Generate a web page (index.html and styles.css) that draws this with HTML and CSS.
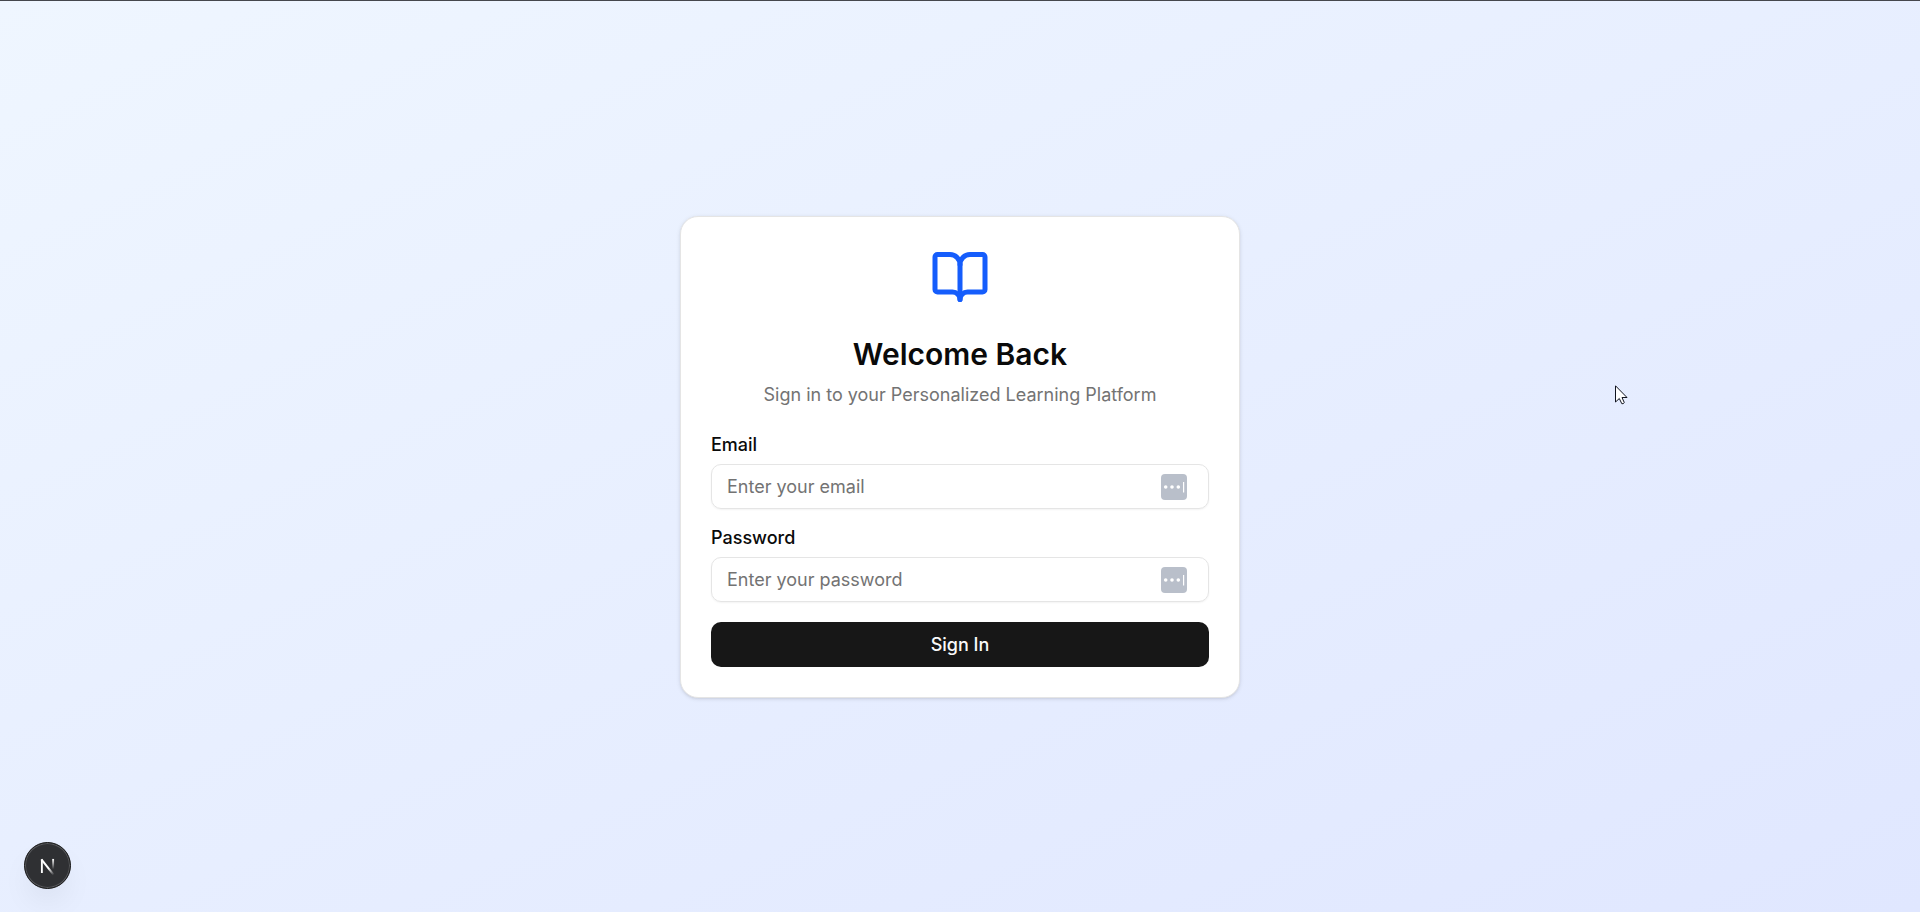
FILE: index.html
```html
<!DOCTYPE html>
<html lang="en">
<head>
<meta charset="utf-8">
<meta name="viewport" content="width=device-width, initial-scale=1">
<title>Sign In</title>
<link rel="stylesheet" href="styles.css">
</head>
<body>
<main class="page">
  <section class="card">
    <header class="card-header">
      <svg class="logo" viewBox="0 0 24 24" aria-hidden="true">
        <path d="M12 7v14"/>
        <path d="M3 18a1 1 0 0 1-1-1V4a1 1 0 0 1 1-1h5a4 4 0 0 1 4 4 4 4 0 0 1 4-4h5a1 1 0 0 1 1 1v13a1 1 0 0 1-1 1h-6a3 3 0 0 0-3 3 3 3 0 0 0-3-3z"/>
      </svg>
      <h1 class="title">Welcome Back</h1>
      <p class="subtitle">Sign in to your Personalized Learning Platform</p>
    </header>
    <form class="form">
      <div class="field">
        <label class="label" for="email">Email</label>
        <div class="control">
          <input class="input" id="email" type="email" placeholder="Enter your email">
          <svg class="autofill" viewBox="0 0 26 26" aria-hidden="true">
            <rect width="26" height="26" rx="4" fill="#b9bfca"/>
            <circle cx="4.700" cy="13" r="1.800"/><circle cx="11" cy="13" r="1.800"/><circle cx="17.300" cy="13" r="1.800"/>
            <rect x="22" y="8" width="1.200" height="10.500"/>
          </svg>
        </div>
      </div>
      <div class="field">
        <label class="label" for="password">Password</label>
        <div class="control">
          <input class="input" id="password" type="password" placeholder="Enter your password">
          <svg class="autofill" viewBox="0 0 26 26" aria-hidden="true">
            <rect width="26" height="26" rx="4" fill="#b9bfca"/>
            <circle cx="4.700" cy="13" r="1.800"/><circle cx="11" cy="13" r="1.800"/><circle cx="17.300" cy="13" r="1.800"/>
            <rect x="22" y="8" width="1.200" height="10.500"/>
          </svg>
        </div>
      </div>
      <button class="submit" type="submit">Sign In</button>
    </form>
  </section>
</main>
<button class="dev-badge" type="button" aria-label="Open developer tools">
  <svg class="dev-icon" viewBox="0 0 48 48" aria-hidden="true">
    <defs>
      <linearGradient id="fade-a" gradientUnits="userSpaceOnUse" x1="27" y1="26" x2="32" y2="33">
        <stop offset="0" stop-color="#fff"/><stop offset="1" stop-color="#fff" stop-opacity="0"/>
      </linearGradient>
      <linearGradient id="fade-b" gradientUnits="userSpaceOnUse" x1="0" y1="17" x2="0" y2="28">
        <stop offset="0" stop-color="#fff"/><stop offset="1" stop-color="#fff" stop-opacity="0"/>
      </linearGradient>
    </defs>
    <path d="M18 32V17.500" stroke="#fff" stroke-width="2"/>
    <path d="M17.500 17.500L31 34.500" stroke="url(#fade-a)" stroke-width="2.200"/>
    <path d="M30 17V28" stroke="url(#fade-b)" stroke-width="2"/>
  </svg>
</button>
<svg class="pointer" viewBox="0 0 13 20" aria-hidden="true">
  <path d="M.5 .8V17L4.300 13.500L6.800 18.700Q8.200 19.200 9.300 17.600L7 12.500H12Z" fill="#fff" stroke="#10131f"/>
</svg>
</body>
</html>
```
FILE: styles.css
```css
* {
  box-sizing: border-box;
}

body {
  margin: 0;
  font-family: Inter, "Liberation Sans", sans-serif;
  color: #0a0a0a;
}

.page {
  display: flex;
  align-items: center;
  justify-content: center;
  min-height: 100vh;
  padding: 20px;
  border-top: 1px solid #45474d;
  background: linear-gradient(to bottom right in oklab, #eff6ff, #e0e7ff);
}

.card {
  display: flex;
  flex-direction: column;
  gap: 29px;
  width: 100%;
  max-width: 560px;
  padding: 30px;
  border: 1px solid #e5e5e5;
  border-radius: 18px;
  background: #fff;
  box-shadow: 0 1px 4px rgb(0 0 0 / 10%), 0 1px 3px -1px rgb(0 0 0 / 10%);
}

.card-header {
  display: flex;
  flex-direction: column;
  align-items: center;
  text-align: center;
}

.logo {
  width: 60px;
  height: 60px;
  margin-bottom: 27px;
  fill: none;
  stroke: #155dfc;
  stroke-width: 2;
  stroke-linecap: round;
  stroke-linejoin: round;
}

.title {
  margin: 0 0 8px;
  font-size: 30px;
  font-weight: 600;
  line-height: 40px;
}

.subtitle {
  margin: 0;
  font-size: 18px;
  line-height: 25px;
  color: #737373;
}

.form {
  display: flex;
  flex-direction: column;
  gap: 20px;
}

.field {
  display: flex;
  flex-direction: column;
  gap: 10px;
}

.label {
  font-size: 18px;
  font-weight: 500;
  line-height: 18px;
}

.control {
  position: relative;
}

.input {
  display: block;
  width: 100%;
  height: 45px;
  padding: 0 60px 0 15px;
  border: 1px solid #e5e5e5;
  border-radius: 10px;
  background: transparent;
  font: inherit;
  font-size: 18px;
  box-shadow: 0 1px 2px rgb(0 0 0 / 5%);
}

.input::placeholder {
  color: #737373;
  opacity: 1;
}

.autofill {
  position: absolute;
  top: 10px;
  right: 22px;
  width: 26px;
  height: 26px;
  fill: #fff;
}

.submit {
  height: 45px;
  border: 0;
  border-radius: 10px;
  background: #171717;
  color: #fafafa;
  font: inherit;
  font-size: 18px;
  font-weight: 500;
}

.dev-badge {
  position: fixed;
  bottom: 23px;
  left: 24px;
  width: 47px;
  height: 47px;
  padding: 0;
  border: 1px solid #171717;
  border-radius: 50%;
  background: #2f3033;
  box-shadow: inset 0 0 0 1px #57585b, 0 16px 32px -8px rgb(0 0 0 / 10%);
}

.dev-icon {
  display: block;
  width: 100%;
  height: 100%;
  fill: none;
}

.pointer {
  position: fixed;
  top: 385px;
  left: 1615px;
  width: 13px;
  height: 20px;
}
```
